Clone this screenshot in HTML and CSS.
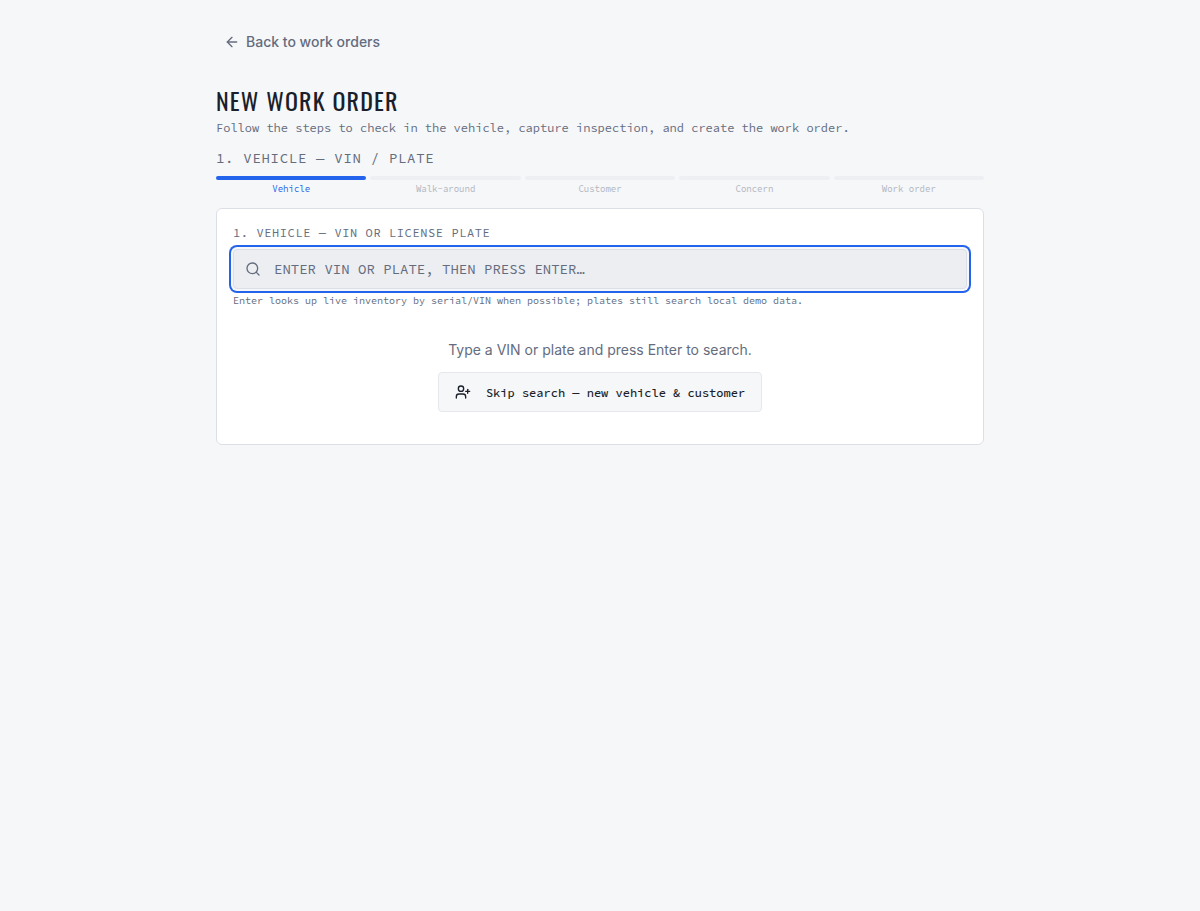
FILE: index.html
```html
<!DOCTYPE html>
<html lang="en">
<head>
  <meta charset="UTF-8">
  <meta name="viewport" content="width=device-width, initial-scale=1.0">
  <title>New Work Order</title>
  <link rel="stylesheet" href="styles.css">
</head>
<body>
  <main class="page">
    <a href="#" class="back-link">
      <svg class="icon" viewBox="0 0 24 24"><path d="m12 19-7-7 7-7"/><path d="M19 12H5"/></svg>
      Back to work orders
    </a>

    <header class="header">
      <h1 class="title">NEW WORK ORDER</h1>
      <p class="subtitle">Follow the steps to check in the vehicle, capture inspection, and create the work order.</p>
    </header>

    <h2 class="step-title">1. VEHICLE — VIN / PLATE</h2>
    <ol class="steps">
      <li class="step active">Vehicle</li>
      <li class="step">Walk-around</li>
      <li class="step">Customer</li>
      <li class="step">Concern</li>
      <li class="step">Work order</li>
    </ol>

    <section class="card">
      <label class="label" for="vin">1. VEHICLE — VIN OR LICENSE PLATE</label>
      <div class="search">
        <svg class="icon search-icon" viewBox="0 0 24 24"><circle cx="11" cy="11" r="8"/><path d="m21 21-4.3-4.3"/></svg>
        <input type="text" id="vin" class="search-input" placeholder="ENTER VIN OR PLATE, THEN PRESS ENTER…" autocomplete="off" autofocus>
      </div>
      <p class="hint">Enter looks up live inventory by serial/VIN when possible; plates still search local demo data.</p>

      <div class="empty">
        <p class="empty-text">Type a VIN or plate and press Enter to search.</p>
        <button type="button" class="skip-button">
          <svg class="icon" viewBox="0 0 24 24"><path d="M16 21v-2a4 4 0 0 0-4-4H6a4 4 0 0 0-4 4v2"/><circle cx="9" cy="7" r="4"/><path d="M19 8v6"/><path d="M22 11h-6"/></svg>
          Skip search — new vehicle &amp; customer
        </button>
      </div>
    </section>
  </main>
</body>
</html>
```

FILE: styles.css
```css
* {
  margin: 0;
  padding: 0;
  box-sizing: border-box;
}

body {
  font-family: Inter, sans-serif;
  font-size: 14px;
  line-height: 20px;
  background-color: #f6f7f9;
  color: #1a1f2b;
}

.page {
  max-width: 816px;
  margin: 0 auto;
  padding: 24px;
}

.icon {
  width: 16px;
  height: 16px;
  flex-shrink: 0;
  fill: none;
  stroke: currentColor;
  stroke-width: 2;
  stroke-linecap: round;
  stroke-linejoin: round;
}

.back-link {
  display: inline-flex;
  align-items: center;
  gap: 6px;
  height: 36px;
  padding: 0 8px;
  font-weight: 500;
  color: #646c7e;
  text-decoration: none;
}

.header {
  margin-top: 24px;
}

.title {
  font-family: Oswald, "Roboto Condensed", "Liberation Sans Narrow", "Liberation Sans", sans-serif;
  font-size: 24px;
  line-height: 32px;
  font-weight: 400;
  letter-spacing: 0.05em;
}

.subtitle,
.step-title,
.steps,
.label,
.search-input,
.hint,
.skip-button {
  font-family: "Source Code Pro", "Noto Sans Mono", "Liberation Mono", monospace;
}

.subtitle {
  margin-top: 4px;
  font-size: 12px;
  line-height: 16px;
  color: #646c7e;
}

.step-title {
  margin-top: 12px;
  font-size: 14px;
  font-weight: 400;
  letter-spacing: 0.05em;
  color: #646c7e;
}

.steps {
  display: flex;
  gap: 4px;
  margin-top: 8px;
  list-style: none;
}

.step {
  flex: 1;
  font-size: 9px;
  line-height: 16px;
  text-align: center;
  color: #b2b6bf;
}

.step::before {
  content: '';
  display: block;
  height: 4px;
  border-radius: 2px;
  margin-bottom: 1px;
  background-color: #eeeff2;
}

.step.active {
  color: #2463eb;
}

.step.active::before {
  background-color: #2463eb;
}

.card {
  margin-top: 11px;
  padding: 16px 16px 32px;
  border: 1px solid #dcdfe6;
  border-radius: 6px;
  background-color: white;
}

.label {
  display: block;
  font-size: 12px;
  line-height: 16px;
  letter-spacing: 0.05em;
  color: #646c7e;
}

.search {
  position: relative;
  margin-top: 8px;
}

.search-icon {
  position: absolute;
  top: 12px;
  left: 12px;
  color: #646c7e;
}

.search-input {
  display: block;
  width: 100%;
  height: 40px;
  padding: 0 12px 0 40px;
  font-size: 14px;
  color: #1a1f2b;
  border: 1px solid #dcdfe6;
  border-radius: 4px;
  background-color: #edeef2;
}

.search-input::placeholder {
  color: #646c7e;
  opacity: 1;
}

.search-input:focus {
  outline: none;
  box-shadow: 0 0 0 2px #f6f7f9, 0 0 0 4px #2463eb;
}

.hint {
  margin-top: 4px;
  font-size: 10px;
  line-height: 16px;
  color: #646c7e;
}

.empty {
  display: flex;
  flex-direction: column;
  align-items: center;
  gap: 12px;
  margin-top: 31px;
}

.empty-text {
  color: #646c7e;
}

.skip-button {
  display: flex;
  align-items: center;
  gap: 15px;
  height: 40px;
  padding: 0 16px;
  font-size: 12px;
  font-weight: 500;
  color: #1a1f2b;
  border: 1px solid #e6e8ed;
  border-radius: 4px;
  background-color: #f6f7f9;
  cursor: pointer;
}
```
